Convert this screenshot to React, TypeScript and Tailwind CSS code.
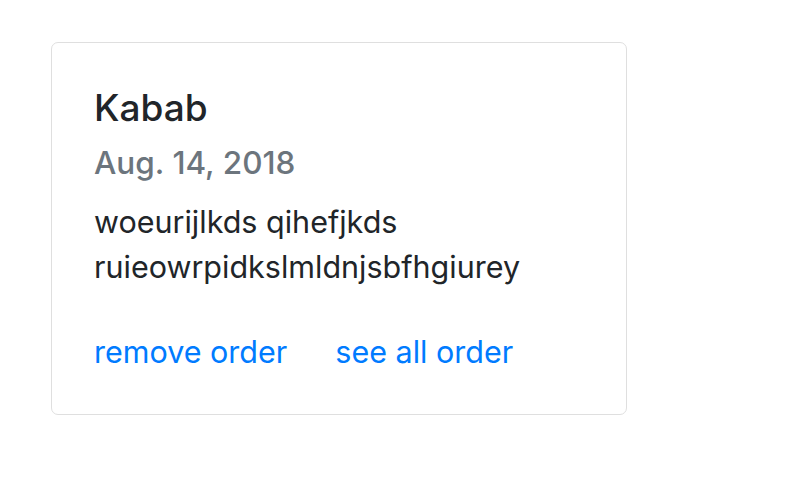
export default function App() {
  return (
    <div className="min-h-screen bg-white pl-[51px] pt-[42px]" style={{ fontFamily: 'Inter, "Liberation Sans", sans-serif' }}>
      <div className="w-[576px] rounded-[7px] border border-[#dfdfdf] px-[42px] pt-[43px] pb-[40px] text-[#212529]">
        <h5 className="mb-[14px] text-[37px] font-medium leading-[1.2]">Kabab</h5>
        <h6 className="mb-[17px] text-[31.5px] font-medium leading-[1.2] text-[#6c757d]">Aug. 14, 2018</h6>
        <p className="mb-[40px] text-[30.5px] leading-[45px]">
          woeurijlkds qihefjkds ruieowrpidkslmldnjsbfhgiurey
        </p>
        <div className="flex gap-[48px] text-[30.5px] leading-[45px] text-[#007bff]">
          <a href="#">remove order</a>
          <a href="#">see all order</a>
        </div>
      </div>
    </div>
  );
}
